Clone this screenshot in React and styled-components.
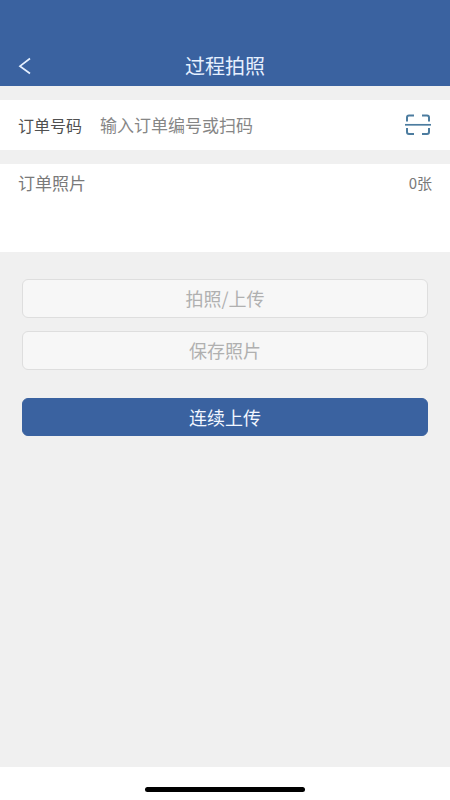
/// external modules ///
import React, { useState } from 'react';
import styled, { createGlobalStyle } from 'styled-components';

/***************************************
  STYLES
***************************************/

const GlobalStyle = createGlobalStyle`
  * {
    box-sizing: border-box;
  }

  body {
    margin: 0;
    background: #F0F0F0;
  }

  body, button, input {
    font-family: 'Noto Sans CJK SC', sans-serif;
  }
`;

/***************************************
  COMPONENTS
***************************************/

const Page = styled.div`
  display: flex;
  flex-flow: column nowrap;
  min-height: 100vh;
`;

const Header = styled.header`
  display: grid;
  grid-template-columns: 48px 1fr 48px;
  align-items: center;
  padding: 46px 0 0;
  color: #E6F0FF;
  background: #3A62A0;
`;

const Title = styled.h1`
  margin: 0;
  font-size: 20px;
  font-weight: 400;
  line-height: 40px;
  text-align: center;
`;

const IconButton = styled.button`
  display: flex;
  border: none;
  padding: 0;
  color: ${({ $color }) => $color};
  background: none;
  cursor: pointer;
`;

const BackButton = styled(IconButton)`
  padding-left: 18px;
`;

const Main = styled.main`
  flex: 1 0 auto;
  display: flex;
  flex-flow: column nowrap;
  gap: 14px;
  padding-top: 14px;
`;

const OrderRow = styled.div`
  display: flex;
  align-items: center;
  padding: 10px 19px 10px 18px;
  background: White;
`;

const OrderLabel = styled.label`
  margin-right: 18px;
  color: #505050;
  font-size: 16px;
  line-height: 30px;
`;

const OrderInput = styled.input`
  flex: 1 1 0;
  min-width: 0;
  border: none;
  padding: 0;
  outline: none;
  color: #505050;
  background: none;
  font-size: 17px;
  line-height: 30px;

  &::placeholder {
    color: #868686;
    opacity: 1;
  }
`;

const Photos = styled.section`
  padding: 4px 18px 54px;
  background: White;
`;

const PhotosHeader = styled.div`
  display: flex;
  align-items: center;
  justify-content: space-between;
  color: #7A7A7A;
  line-height: 30px;
`;

const PhotosTitle = styled.h2`
  margin: 0;
  font-size: 17px;
  font-weight: 400;
`;

const PhotosCount = styled.span`
  font-size: 15px;
`;

const Actions = styled.div`
  display: flex;
  flex-flow: column nowrap;
  gap: 13px;
  padding: 13px 22px;
`;

const ActionButton = styled.button`
  border: 1px solid #DEDEDE;
  border-radius: 6px;
  padding: 0;
  color: #B0B0B0;
  background: #F7F7F7;
  font-size: 18px;
  line-height: 37px;
`;

const PrimaryButton = styled(ActionButton)`
  margin-top: 15px;
  border-color: #3A62A0;
  color: #F2F7FF;
  background: #3A62A0;
  line-height: 36px;
  cursor: pointer;
`;

const Footer = styled.footer`
  display: flex;
  justify-content: center;
  padding: 20px 0 8px;
  background: White;
`;

const HomeIndicator = styled.div`
  width: 160px;
  height: 5px;
  border-radius: 3px;
  background: Black;
`;

/***************************************
  ICONS
***************************************/

const BackIcon = () => (
  <svg width='14' height='18' viewBox='0 0 14 18' fill='none' stroke='currentColor' strokeWidth='1.7' aria-hidden='true'>
    <path d='M12 1.5 L2 9.2 L12 16.5' />
  </svg>
);

const ScanIcon = () => (
  <svg width='26' height='22' viewBox='0 0 26 22' fill='none' stroke='currentColor' strokeWidth='2' aria-hidden='true'>
    <path d='M2 7.5 V3.5 Q2 1.5 4 1.5 H9' />
    <path d='M17 1.5 H22 Q24 1.5 24 3.5 V7.5' />
    <path d='M2 14 V18 Q2 20 4 20 H9' />
    <path d='M17 20 H22 Q24 20 24 18 V14' />
    <path d='M0 10.8 H26' strokeWidth='1.7' />
  </svg>
);

/***************************************
  MAIN
***************************************/

const App = () => {
  const [order, setOrder] = useState ('');
  const photos = [];

  return (
    <Page>
      <GlobalStyle />
      <Header>
        <BackButton type='button' aria-label='返回' $color='#E6F0FF'><BackIcon /></BackButton>
        <Title>过程拍照</Title>
      </Header>

      <Main>
        <OrderRow>
          <OrderLabel htmlFor='order'>订单号码</OrderLabel>
          <OrderInput
            id='order'
            type='text'
            placeholder='输入订单编号或扫码'
            value={order}
            onChange={(event) => setOrder (event.target.value)}
          />
          <IconButton type='button' aria-label='扫码' $color='#4C7C9F'><ScanIcon /></IconButton>
        </OrderRow>

        <Photos>
          <PhotosHeader>
            <PhotosTitle>订单照片</PhotosTitle>
            <PhotosCount>{photos.length}张</PhotosCount>
          </PhotosHeader>
        </Photos>

        <Actions>
          <ActionButton type='button' disabled>拍照/上传</ActionButton>
          <ActionButton type='button' disabled>保存照片</ActionButton>
          <PrimaryButton type='button'>连续上传</PrimaryButton>
        </Actions>
      </Main>

      <Footer><HomeIndicator /></Footer>
    </Page>
  );
};

/**************************************/

export default App;
